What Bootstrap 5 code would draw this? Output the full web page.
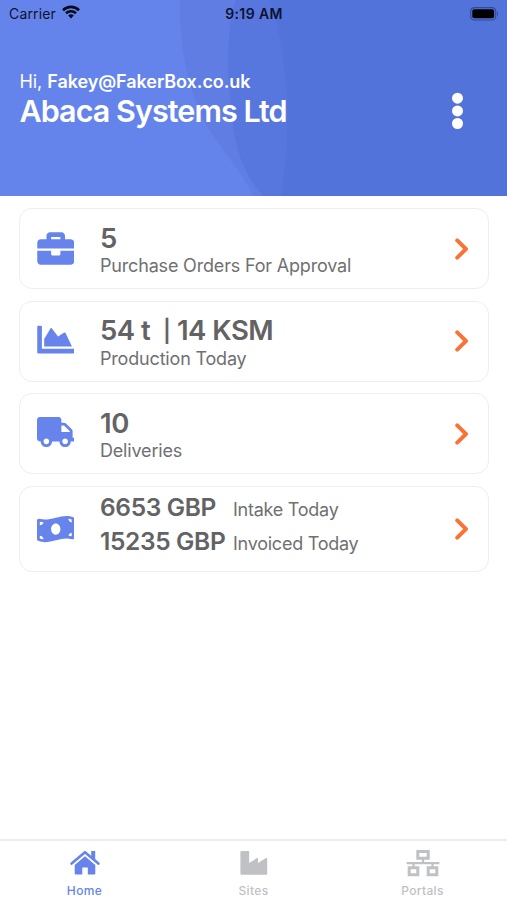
<!DOCTYPE html>
<html lang="en">
<head>
<meta charset="utf-8">
<meta name="viewport" content="width=device-width, initial-scale=1">
<title>Abaca Systems Ltd</title>
<link href="https://cdn.jsdelivr.net/npm/bootstrap@5.3.0/dist/css/bootstrap.min.css" rel="stylesheet">
<style>
body{font-family:Inter,"Liberation Sans",sans-serif;color:#636365;background:#fff}
svg{display:block;flex:none}
.hero{height:196px;background:#6584eb}
.status-bar{height:28px;color:#0c1330;font-size:14px;line-height:28px;padding:0 8px 0 9px}
.status-bar>div{flex:1}
.carrier{letter-spacing:.15px}
.wifi{margin-left:6px}
.clock{font-weight:600;letter-spacing:.4px}
.greeting{padding:42px 42px 0 19.5px}
.hello{font-size:18px;line-height:23px;letter-spacing:-.07px}
.hello b{font-weight:570}
.company{font-size:30.5px;line-height:36px;font-weight:570;letter-spacing:-.95px}
.dots{margin-top:22px}
.tiles{padding:12px 18px 0 18.5px;gap:11.5px}
.tile{height:81px;border:1.5px solid #eeeef0;border-radius:13px;padding:0 19px 0 17px}
.tile-tall{height:86px}
.glyph{width:37.5px;margin-right:26px;color:#6684ec}
.lines{padding-top:3px}
.figure-text{font-size:27.5px;line-height:30px;font-weight:570;letter-spacing:-.5px;white-space:pre}
.divider{font-size:22px;vertical-align:1px}
.caption-text{font-size:18px;line-height:25px;letter-spacing:-.18px;color:#707072}
.pair{grid-template-columns:133px auto;grid-auto-rows:34px;align-items:baseline;padding-bottom:9px}
.pair .figure-text{font-size:24.5px;line-height:34px;letter-spacing:-.35px}
.pair .caption-text{line-height:34px;letter-spacing:-.25px}
.tabs{height:61px;border-top:2px solid #ededef;font-size:12px;line-height:16px;font-weight:550;letter-spacing:.35px;color:#bfc1c5}
.tabs a{color:inherit;text-decoration:none;flex:1;padding-top:8px}
.tabs a.current{color:#6684ec}
.tabs svg{height:28px;margin-bottom:6px}
</style>
</head>
<body>
<div class="vh-100 d-flex flex-column overflow-hidden">
<header class="hero position-relative text-white">
  <svg class="position-absolute top-0 start-0" width="507" height="196" viewBox="0 0 507 196" aria-hidden="true">
    <path fill="#5f7de3" d="M180 0C179 28 183 66 195 100C207 137 243 170 253 196H507V0Z"/>
    <path fill="#5877de" d="M236 0C228 25 226 60 230 95C233 130 235 164 263 196H507V0Z"/>
    <path fill="#5273da" d="M270 0C286 47 294 125 281 196H507V0Z"/>
  </svg>
  <div class="position-relative">
    <div class="status-bar d-flex align-items-center">
      <div class="d-flex align-items-center"><span class="carrier">Carrier</span>
        <svg width="18" height="14" viewBox="0 0 18 14" fill="none" stroke="#060a1c" stroke-width="2.6" class="wifi mb-1"><path d="M1 5.2C5.5.8 12.5.8 17 5.2M4 8.2C6.8 5.5 11.2 5.5 14 8.2"/><path d="M6.2 10.4C7.8 9 10.2 9 11.8 10.4L9 13.5Z" fill="#060a1c" stroke="none"/></svg>
      </div>
      <div class="text-center clock">9:19 AM</div>
      <div><svg class="ms-auto" width="29" height="14" viewBox="0 0 29 14"><rect x=".7" y=".7" width="25" height="12.3" rx="3.6" fill="none" stroke="#344a92" stroke-width="1.2"/><rect x="2.3" y="2.3" width="21.8" height="9" rx="2" fill="#000"/><path d="M27 4.6q2 2.2 0 4.4Z" fill="#344a92"/></svg></div>
    </div>
    <div class="greeting d-flex justify-content-between">
      <div><div class="hello">Hi, <b>Fakey@FakerBox.co.uk</b></div><h1 class="company mb-0">Abaca Systems Ltd</h1></div>
      <svg class="dots" width="15" height="38" viewBox="0 0 15 38" fill="#fff"><circle cx="7.5" cy="6.2" r="5.5"/><circle cx="7.5" cy="18.9" r="5.5"/><circle cx="7.5" cy="31.5" r="5.5"/></svg>
    </div>
  </div>
</header>
<main class="tiles d-flex flex-column flex-grow-1">
  <section class="tile d-flex align-items-center">
    <svg class="glyph" height="37" viewBox="0 0 512 512" fill="currentColor"><path d="M320 336c0 8.84-7.16 16-16 16h-96c-8.84 0-16-7.16-16-16v-48H0v144c0 25.6 22.4 48 48 48h416c25.6 0 48-22.4 48-48V288H320v48zm144-208h-80V80c0-25.6-22.4-48-48-48H176c-25.6 0-48 22.4-48 48v48H48c-25.6 0-48 22.4-48 48v80h512v-80c0-25.6-22.4-48-48-48zm-144 0H192V96h128v32z"/></svg>
    <div class="lines flex-grow-1"><div class="figure-text">5</div><div class="caption-text">Purchase Orders For Approval</div></div>
    <svg class="arrow" width="14" height="22" viewBox="0 0 14 22" fill="none" stroke="#fa7236" stroke-width="3.9" stroke-linecap="round" stroke-linejoin="round"><path d="M2.2 2.4L11 11L2.2 19.6"/></svg>
  </section>
  <section class="tile d-flex align-items-center">
    <svg class="glyph mb-1" height="37" viewBox="0 0 512 512" fill="currentColor"><path d="M500 384c6.6 0 12 5.4 12 12v40c0 6.6-5.4 12-12 12H12c-6.6 0-12-5.4-12-12V76c0-6.6 5.4-12 12-12h40c6.6 0 12 5.4 12 12v308h436zM372.7 159.5L288 216l-85.3-113.7c-5.1-6.8-15.5-6.3-19.9 1L96 248v104h384l-89.9-187.8c-3.2-6.5-11.4-8.7-17.4-4.7z"/></svg>
    <div class="lines flex-grow-1"><div class="figure-text">54 t  <span class="divider">|</span> 14 KSM</div><div class="caption-text">Production Today</div></div>
    <svg class="arrow" width="14" height="22" viewBox="0 0 14 22" fill="none" stroke="#fa7236" stroke-width="3.9" stroke-linecap="round" stroke-linejoin="round"><path d="M2.2 2.4L11 11L2.2 19.6"/></svg>
  </section>
  <section class="tile d-flex align-items-center">
    <svg class="glyph mb-1" height="30" viewBox="0 0 640 512" fill="currentColor"><path d="M624 352h-16V243.9c0-12.7-5.1-24.9-14.1-33.9L494 110.1c-9-9-21.2-14.1-33.9-14.1H416V48c0-26.5-21.5-48-48-48H48C21.5 0 0 21.5 0 48v320c0 26.5 21.5 48 48 48h16c0 53 43 96 96 96s96-43 96-96h128c0 53 43 96 96 96s96-43 96-96h48c8.8 0 16-7.2 16-16v-32c0-8.8-7.2-16-16-16zM160 464c-26.5 0-48-21.5-48-48s21.5-48 48-48 48 21.5 48 48-21.5 48-48 48zm320 0c-26.5 0-48-21.5-48-48s21.5-48 48-48 48 21.5 48 48-21.5 48-48 48zm80-208H416V144h44.1l99.9 99.9V256z"/></svg>
    <div class="lines flex-grow-1"><div class="figure-text">10</div><div class="caption-text">Deliveries</div></div>
    <svg class="arrow" width="14" height="22" viewBox="0 0 14 22" fill="none" stroke="#fa7236" stroke-width="3.9" stroke-linecap="round" stroke-linejoin="round"><path d="M2.2 2.4L11 11L2.2 19.6"/></svg>
  </section>
  <section class="tile tile-tall d-flex align-items-center">
    <svg class="glyph" height="30" viewBox="0 0 640 512" fill="currentColor"><path d="M621.16 54.46C582.37 38.19 543.55 32 504.75 32c-123.17-.01-246.33 62.34-369.5 62.34-30.89 0-61.76-3.92-92.65-13.72-3.47-1.1-6.95-1.62-10.35-1.62C15.04 79 0 92.32 0 110.81v317.26c0 12.63 7.23 24.6 18.84 29.46C57.63 473.81 96.45 480 135.25 480c123.17 0 246.34-62.35 369.51-62.35 30.89 0 61.76 3.92 92.65 13.72 3.47 1.1 6.95 1.62 10.35 1.62 17.21 0 32.25-13.32 32.25-31.81V83.93c-.01-12.64-7.24-24.6-18.85-29.47zM48 132.22c20.12 5.04 41.12 7.57 62.72 8.93C104.84 170.54 79 192.69 48 192.69v-60.47zm0 285v-47.78c34.37 0 62.18 27.27 63.71 61.4-22.53-1.81-43.59-6.31-63.71-13.62zM320 352c-44.19 0-80-42.99-80-96 0-53.02 35.82-96 80-96s80 42.98 80 96c0 53.03-35.83 96-80 96zm272 27.78c-17.52-4.39-35.71-6.85-54.32-8.44 5.87-26.08 27.5-45.88 54.32-49.28v57.72zm0-236.11c-30.89-3.91-54.86-29.7-55.81-61.55 19.54 2.17 38.09 6.23 55.81 12.66v48.89z"/></svg>
    <div class="pair d-grid flex-grow-1"><div class="figure-text">6653 GBP</div><div class="caption-text">Intake Today</div><div class="figure-text">15235 GBP</div><div class="caption-text">Invoiced Today</div></div>
    <svg class="arrow" width="14" height="22" viewBox="0 0 14 22" fill="none" stroke="#fa7236" stroke-width="3.9" stroke-linecap="round" stroke-linejoin="round"><path d="M2.2 2.4L11 11L2.2 19.6"/></svg>
  </section>
</main>
<nav class="tabs d-flex">
  <a href="#" class="current d-flex flex-column align-items-center"><svg width="30" viewBox="0 0 30 28" fill="currentColor"><path d="M1.6 14.6L15 3.2L28.4 14.6" fill="none" stroke="currentColor" stroke-width="2.6" stroke-linecap="round" stroke-linejoin="round"/><path d="M21.2 1.9H25.2V11L21.2 7.5ZM15 7.3L25.3 16V24.4Q25.3 25.4 24.3 25.4H17.8V18.5H12.3V25.4H5.7Q4.7 25.4 4.7 24.4V16Z"/></svg>Home</a>
  <a href="#" class="d-flex flex-column align-items-center"><svg width="28" viewBox="0 0 28 27" fill="currentColor"><path d="M1.5 1.6H8.3Q9.2 1.6 9.2 2.5V13.6L16.8 8.6Q18 8 18 9.2V13.6L26 8.6Q27.2 8 27.2 9.2V24.2Q27.2 25.2 26.2 25.2H1.4Q.4 25.2.4 24.2V2.6Q.4 1.6 1.5 1.6Z"/></svg>Sites</a>
  <a href="#" class="d-flex flex-column align-items-center"><svg width="34" viewBox="0 0 34 27" fill="none" stroke="currentColor" stroke-width="3"><path d="M11.8 2H22.2V8.8H11.8ZM3.2 18.2H11.8V25.2H3.2ZM22.2 18.2H30.8V25.2H22.2Z"/><path d="M.6 13.6H33.4M17 9V13.6M7.5 13.6V18M26.5 13.6V18" stroke-width="2.2"/></svg>Portals</a>
</nav>
</div>
<script src="https://cdn.jsdelivr.net/npm/bootstrap@5.3.0/dist/js/bootstrap.bundle.min.js"></script>
</body>
</html>
